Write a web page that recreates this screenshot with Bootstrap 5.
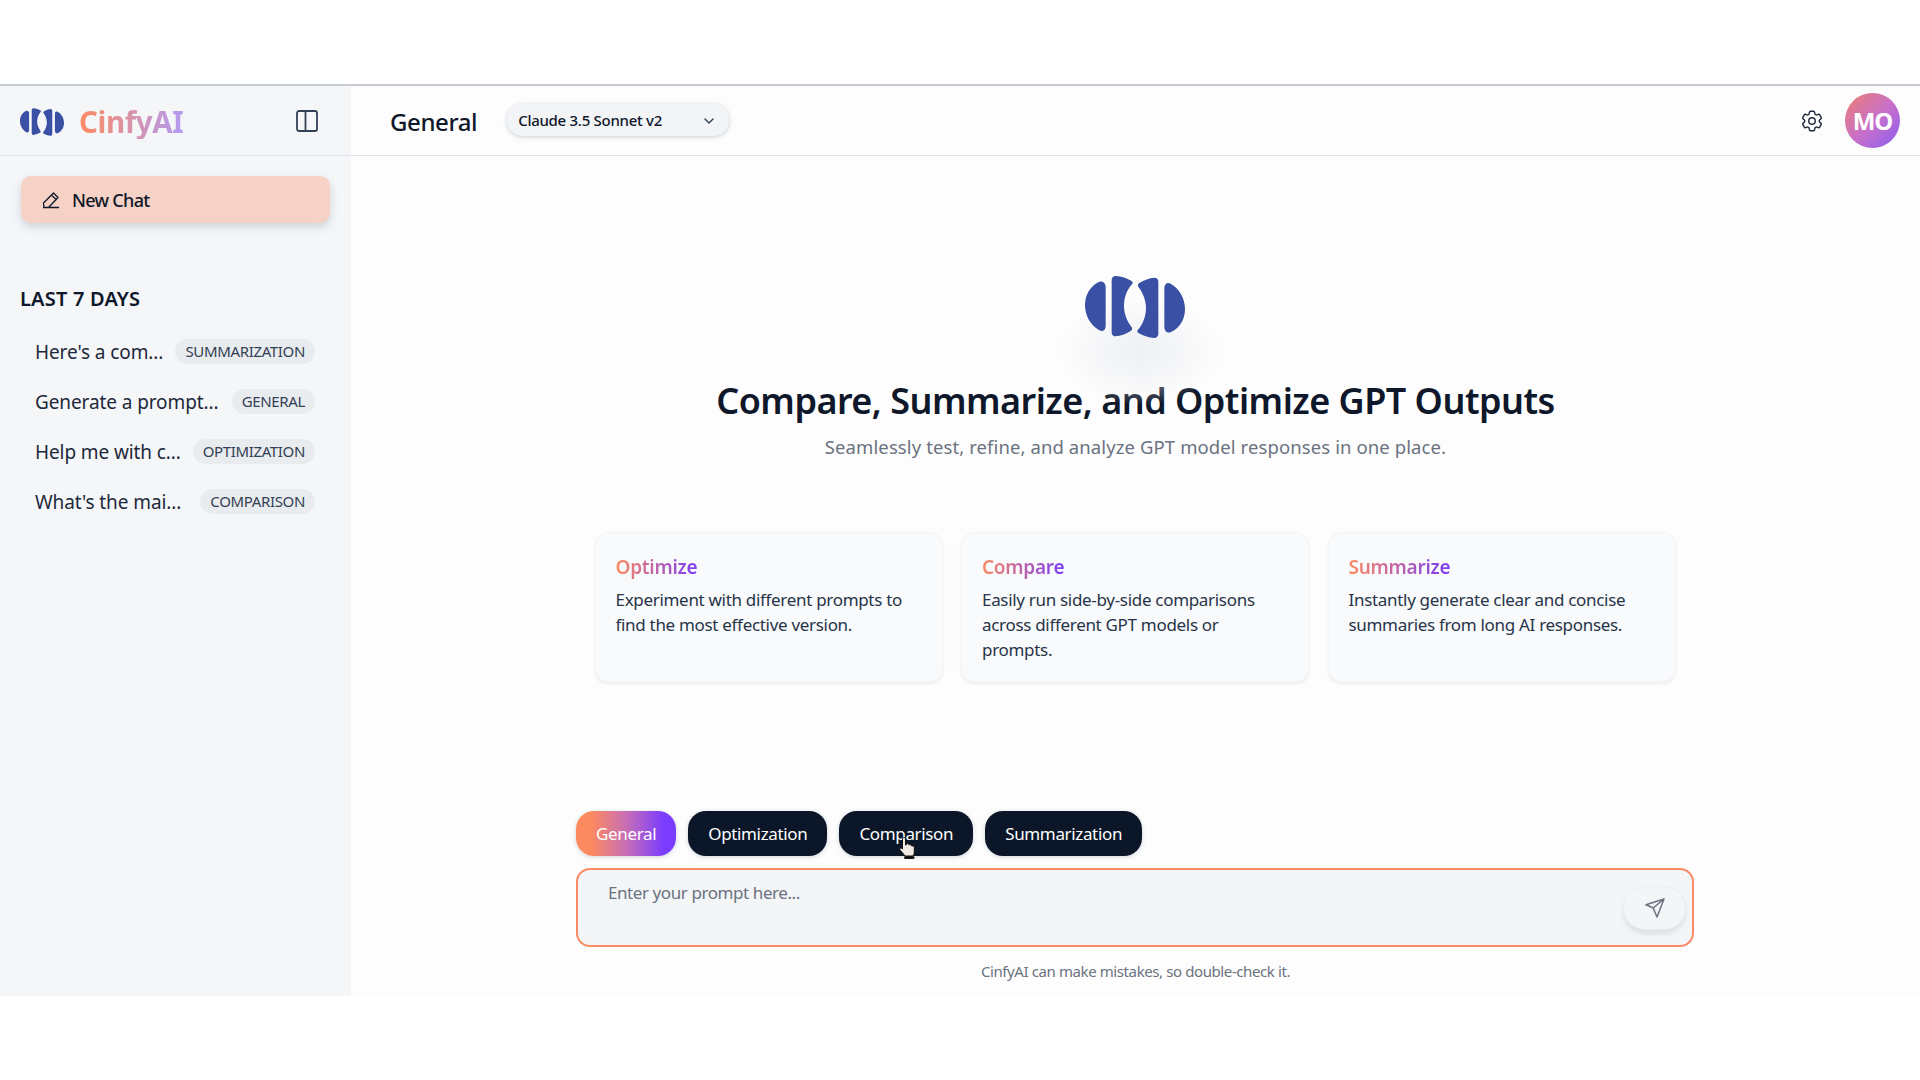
<!DOCTYPE html>
<html lang="en">
<head>
  <meta charset="UTF-8" />
  <title>CinfyAI</title>
  <link href="https://cdn.jsdelivr.net/npm/bootstrap@5.3.3/dist/css/bootstrap.min.css" rel="stylesheet" />
  <style>
    body { background: #fff; color: #0f172a; font-family: "Noto Sans", "Open Sans", sans-serif; overflow: hidden; }
    .top-gap { height: 84px; border-bottom: 2px solid #c6cad1; box-sizing: content-box; }
    .app-frame { height: 910px; background: #fdfdfd; }
    .side-panel { width: 351px; flex: none; background: #f4f6f8; }
    .side-head { height: 70px; border-bottom: 1px solid #e0e2e6; padding: 2px 32px 0 20px; }
    .brand-logo { width: 44px; height: 28px; }
    .brand-name { font-size: 29.5px; font-weight: 700; letter-spacing: -.4px; margin: 2px 0 0 15px; line-height: 1.1; background: linear-gradient(90deg, #fd8a62, #b39bf2); -webkit-background-clip: text; background-clip: text; color: transparent; }
    .panel-icon { margin-top: -2px; }
    .new-chat { margin: 20px 0 0 21px; height: 47px; width: 309px; background: #f6d1c5; border: 0; border-radius: 10px; box-shadow: 0 4px 8px rgba(120,135,155,.3); font-size: 18px; font-weight: 500; color: #0f172a; padding: 1px 0 0 21px; letter-spacing: -.7px; }
    .side-title { font-size: 20px; font-weight: 600; margin: 62px 0 0 20px; line-height: 28px; letter-spacing: .2px; }
    .chat-rows { margin: 13px 36px 0 35px; }
    .chat-row { height: 50px; font-size: 19px; color: #1e293b; letter-spacing: -.1px; }
    .chat-text { padding-top: 2px; }
    .chat-tag { background: #e9ecef; color: #334155; font-size: 15px; font-weight: 400; padding: 0 10px; line-height: 25px; letter-spacing: -.35px; }
    .main-head { height: 70px; border-bottom: 1px solid #e0e2e6; padding: 0 20px 0 39px; }
    .page-name { font-size: 24px; font-weight: 500; margin: 2px 30px 0 0; letter-spacing: -.4px; line-height: 1; }
    .model-pick { width: 222px; height: 32px; background: #f2f4f6; border-radius: 15px; box-shadow: 0 1px 4px rgba(120,135,155,.4); padding: 1px 14px 0 11px; font-size: 15px; font-weight: 500; margin-top: -1px; letter-spacing: -.28px; }
    .avatar-mo { width: 55px; height: 55px; margin-left: 20px; background: linear-gradient(135deg, #f07f72, #c46fce 55%, #8a5cf0); font-size: 24px; font-weight: 700; letter-spacing: -1px; }
    .hero-logo { width: 100px; height: 62px; margin: 120px 2px 0 0; position: relative; }
    .hero-glow { position: absolute; left: -30px; top: 20px; width: 170px; height: 110px; background: radial-gradient(ellipse, #eef0f3 0%, rgba(240,242,244,0) 70%); }
    .hero-title { font-size: 36px; font-weight: 600; margin: 39px 0 0; line-height: 48px; letter-spacing: -.52px; }
    .hero-sub { font-size: 18.5px; color: #6b7280; margin: 9px 0 0; line-height: 26px; letter-spacing: .1px; }
    .feature-grid { width: 1081px; margin: 72px 1px 0 0; display: grid; grid-template-columns: repeat(3, 1fr); gap: 18.5px; }
    .feature-box { height: 150px; background: #f9fafb; border: 1px solid #f4f5f7; border-radius: 13px; box-shadow: 0 2px 3px rgba(120,135,155,.12); padding: 21px 20px; }
    .feature-name { font-size: 19px; font-weight: 600; line-height: 26px; margin: 0 0 7px; background: linear-gradient(90deg, #fb8a62, #7b3cf5 100%); -webkit-background-clip: text; background-clip: text; color: transparent; width: fit-content; letter-spacing: -.25px; }
    .feature-text { font-size: 17px; line-height: 25px; color: #273449; margin: 0; letter-spacing: -.31px; }
    .prompt-zone { width: 1118px; margin: 129px 1px 0 0; position: relative; }
    .mode-row { column-gap: 12px; }
    .mode-btn { height: 45px; border-radius: 18px; border: 0; background: #0b1729; color: #fff; font-size: 17px; padding: 0 20px; box-shadow: 0 1px 4px rgba(120,135,155,.35); letter-spacing: -.35px; }
    .mode-btn.is-on { background: linear-gradient(90deg, #fd8a5e 15%, #c86fb5 50%, #7a3cff 88%); }
    .prompt-box { height: 79px; margin-top: 12px; border: 2px solid #fb8b66; border-radius: 14px; background: #f3f5f7; padding: 10px 30px; position: relative; }
    .prompt-hint { font-size: 17px; color: #6b7280; line-height: 26px; letter-spacing: -.42px; }
    .send-btn { position: absolute; right: 6px; top: 16px; width: 63px; height: 44px; border-radius: 22px; background: #f3f5f7; border: 1px solid #eceef0; box-shadow: 0 4px 4px rgba(120,135,155,.18); padding: 0; }
    .foot-note { font-size: 15px; color: #6b7280; margin: 12px 0 0; line-height: 24px; letter-spacing: -.4px; }
    .hand-cursor { position: absolute; left: 323px; top: 25px; width: 17px; height: 24px; }
  </style>
</head>
<body>

<svg width="0" height="0" class="position-absolute">
  <symbol id="logo-mark" viewBox="135 78 300 186">
    <g fill="#3a50a5" id="logo-half">
      <path d="M178 95C190 92 197 100 197 112V228C197 240 188 247 178 241C150 225 135 195 135 165C135 135 150 108 178 95Z" />
      <path d="M227 78C245 79 262 85 275 93C279 96 279 100 276 103C260 120 252 145 252 168C252 192 262 215 275 232C278 237 276 240 272 243C258 252 242 258 227 259C220 259 215 254 215 248V90C215 83 220 78 227 78Z" />
    </g>
    <use href="#logo-half" transform="rotate(180 285 171)" />
  </symbol>
</svg>

<div class="top-gap"></div>

<div class="app-frame d-flex">
  <aside class="side-panel d-flex flex-column">
    <div class="side-head d-flex align-items-center">
      <svg class="brand-logo"><use href="#logo-mark" /></svg>
      <span class="brand-name">CinfyAI</span>
      <svg class="panel-icon ms-auto" width="24" height="24" viewBox="0 0 24 24" fill="none" stroke="#334155" stroke-width="1.8"><rect x="2" y="2" width="20" height="20" rx="2" /><path d="M10.5 2v20" /></svg>
    </div>
    <button class="new-chat d-flex align-items-center gap-2" type="button">
      <svg width="18" height="18" viewBox="0 0 18 18" fill="none" stroke="#0f172a" stroke-width="1.3" stroke-linejoin="round" stroke-linecap="round"><path d="M1.5 16.5H16.5M2 16.5 1.5 12 11.500 2 16 6.500 6.500 16.500M9.500 4 14 8.500" /></svg>
      <span class="ms-1">New Chat</span>
    </button>
    <div class="side-title">LAST 7 DAYS</div>
    <div class="chat-rows">
      <div class="chat-row d-flex justify-content-between align-items-center"><span class="chat-text">Here's a com...</span><span class="badge rounded-pill chat-tag">SUMMARIZATION</span></div>
      <div class="chat-row d-flex justify-content-between align-items-center"><span class="chat-text">Generate a prompt...</span><span class="badge rounded-pill chat-tag">GENERAL</span></div>
      <div class="chat-row d-flex justify-content-between align-items-center"><span class="chat-text">Help me with c...</span><span class="badge rounded-pill chat-tag">OPTIMIZATION</span></div>
      <div class="chat-row d-flex justify-content-between align-items-center"><span class="chat-text">What's the mai...</span><span class="badge rounded-pill chat-tag">COMPARISON</span></div>
    </div>
  </aside>

  <main class="flex-grow-1 d-flex flex-column">
    <header class="main-head d-flex align-items-center">
      <h1 class="page-name">General</h1>
      <div class="model-pick d-flex align-items-center justify-content-between">
        <span>Claude 3.5 Sonnet v2</span>
        <svg width="12" height="12" viewBox="0 0 12 12" fill="none" stroke="#334155" stroke-width="1.4" stroke-linecap="round" stroke-linejoin="round"><path d="M2 4l4 4 4-4" /></svg>
      </div>
      <svg class="ms-auto" width="26" height="26" viewBox="0 0 24 24" fill="none" stroke="#1e293b" stroke-width="1.3" stroke-linejoin="round"><path d="M9.594 3.94c.09-.542.56-.94 1.11-.94h2.593c.55 0 1.02.398 1.11.94l.213 1.281c.063.374.313.686.645.87.074.04.147.083.22.127.325.196.72.257 1.075.124l1.217-.456a1.125 1.125 0 0 1 1.37.49l1.296 2.247a1.125 1.125 0 0 1-.26 1.431l-1.003.827c-.293.241-.438.613-.43.992a7.723 7.723 0 0 1 0 .255c-.008.378.137.75.43.991l1.004.827c.424.35.534.955.26 1.43l-1.298 2.247a1.125 1.125 0 0 1-1.369.491l-1.217-.456c-.355-.133-.75-.072-1.076.124a6.47 6.47 0 0 1-.22.128c-.331.183-.581.495-.644.869l-.213 1.281c-.09.543-.56.94-1.11.94h-2.594c-.55 0-1.019-.398-1.11-.94l-.213-1.281c-.062-.374-.312-.686-.644-.87a6.52 6.52 0 0 1-.22-.127c-.325-.196-.72-.257-1.076-.124l-1.217.456a1.125 1.125 0 0 1-1.369-.49l-1.297-2.247a1.125 1.125 0 0 1 .26-1.431l1.004-.827c.292-.24.437-.613.43-.991a6.932 6.932 0 0 1 0-.255c.007-.38-.138-.751-.43-.992l-1.004-.827a1.125 1.125 0 0 1-.26-1.43l1.297-2.247a1.125 1.125 0 0 1 1.37-.491l1.216.456c.356.133.751.072 1.076-.124.072-.044.146-.086.22-.128.332-.183.582-.495.644-.869l.214-1.28Z" /><path d="M15 12a3 3 0 1 1-6 0 3 3 0 0 1 6 0Z" /></svg>
      <div class="avatar-mo rounded-circle text-white d-flex align-items-center justify-content-center">MO</div>
    </header>

    <div class="d-flex flex-column align-items-center text-center">
      <div class="hero-logo">
        <div class="hero-glow"></div>
        <svg class="position-relative" width="100" height="62"><use href="#logo-mark" /></svg>
      </div>
      <h2 class="hero-title">Compare, Summarize, and Optimize GPT Outputs</h2>
      <p class="hero-sub">Seamlessly test, refine, and analyze GPT model responses in one place.</p>

      <div class="feature-grid text-start">
        <div class="feature-box">
          <h3 class="feature-name">Optimize</h3>
          <p class="feature-text">Experiment with different prompts to find the most effective version.</p>
        </div>
        <div class="feature-box">
          <h3 class="feature-name">Compare</h3>
          <p class="feature-text">Easily run side-by-side comparisons across different GPT models or prompts.</p>
        </div>
        <div class="feature-box">
          <h3 class="feature-name">Summarize</h3>
          <p class="feature-text">Instantly generate clear and concise summaries from long AI responses.</p>
        </div>
      </div>

      <div class="prompt-zone text-start">
        <div class="d-flex mode-row">
          <button class="mode-btn is-on" type="button">General</button>
          <button class="mode-btn" type="button">Optimization</button>
          <button class="mode-btn" type="button">Comparison</button>
          <button class="mode-btn" type="button">Summarization</button>
        </div>
        <div class="prompt-box">
          <div class="prompt-hint">Enter your prompt here...</div>
          <button class="send-btn d-flex align-items-center justify-content-center" type="button" aria-label="Send">
            <svg width="20" height="20" viewBox="0 0 20 20" fill="none" stroke="#6b7280" stroke-width="1.5" stroke-linejoin="round"><path d="M19 1 1 6.800 8.200 10 12 19ZM8.200 10 19 1" /></svg>
          </button>
        </div>
        <svg class="hand-cursor" viewBox="0 0 17 24"><path d="M5 1.500c1 0 1.500.6 1.500 1.500v6l1-.2V7.500c1.300-.5 2 .2 2 1l1 .2c1-.3 1.800.2 1.800 1l1 .3c1-.2 2 .3 2 1.300V16c0 2-.8 3-1.500 4H6c-1.500-2-3-4-5-6-.8-1 .2-2.200 1.500-1.800L3.500 13V3c0-1 .6-1.500 1.500-1.500Z" fill="#f2e9e2" stroke="#111" stroke-width="1" /><rect x="5" y="20" width="10.500" height="3" rx="1.500" fill="#111" /></svg>
      </div>
      <p class="foot-note">CinfyAI can make mistakes, so double-check it.</p>
    </div>
  </main>
</div>

<script src="https://cdn.jsdelivr.net/npm/bootstrap@5.3.3/dist/js/bootstrap.bundle.min.js"></script>
</body>
</html>
